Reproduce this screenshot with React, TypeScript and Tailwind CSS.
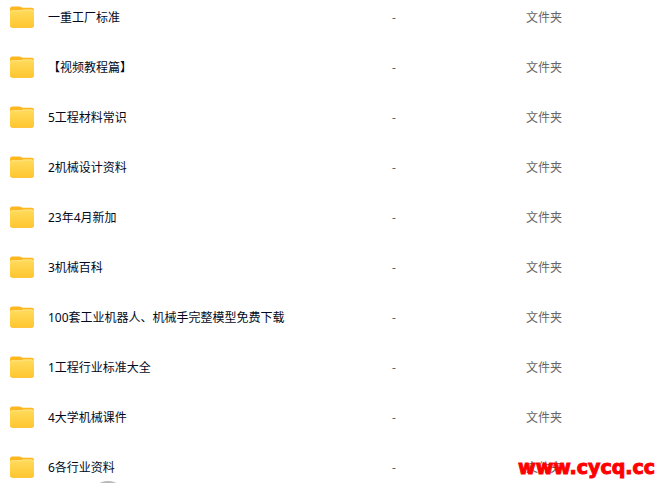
const folders = [
  "一重工厂标准",
  "【视频教程篇】",
  "5工程材料常识",
  "2机械设计资料",
  "23年4月新加",
  "3机械百科",
  "100套工业机器人、机械手完整模型免费下载",
  "1工程行业标准大全",
  "4大学机械课件",
  "6各行业资料",
];

function FolderIcon() {
  return (
    <svg width="24" height="22" viewBox="0 0 24 22" className="block" aria-hidden="true">
      <defs>
        <linearGradient id="folder-front" x1="0" y1="0" x2="0" y2="1">
          <stop offset="0" stopColor="#ffdc5e" />
          <stop offset="1" stopColor="#ffc62f" />
        </linearGradient>
      </defs>
      <path
        d="M0 3Q0 .4 2.3.4H9.5Q10.5.4 11.3 1L12.3 1.8H21.7Q24 1.8 24 4.1V12H0Z"
        fill="#ffb71f"
      />
      <path
        d="M0 6.3Q0 4.2 2.2 4.2H10.5Q11.6 4.2 12.4 3.8 13 3.5 14 3.5H21.8Q24 3.5 24 5.7V19.3Q24 21.7 21.8 21.7H2.2Q0 21.7 0 19.3Z"
        fill="url(#folder-front)"
      />
      <path
        d="M.5 6.5Q.6 4.7 2.4 4.7H10.6Q11.8 4.7 12.6 4.3 13.2 4 14 4H21.6Q23.4 4 23.5 5.8"
        fill="none"
        stroke="#ffe690"
        strokeWidth=".8"
      />
      <path d="M.6 20.2Q1.2 21.4 2.4 21.4H21.6Q22.8 21.4 23.4 20.2" fill="none" stroke="#fbbd2c" strokeWidth=".7" />
    </svg>
  );
}

export default function App() {
  return (
    <main className="relative h-screen overflow-hidden bg-white font-['Noto_Sans','Noto_Sans_CJK_SC',sans-serif] text-xs">
      <table className="w-full table-fixed border-collapse text-left">
        <colgroup>
          <col className="w-12" />
          <col />
          <col className="w-[134px]" />
          <col className="w-[133px]" />
        </colgroup>
        <tbody>
          {folders.map((name) => (
            <tr key={name} className="h-[50px] align-top">
              <td className="pt-1.5 pl-2.5">
                <FolderIcon />
              </td>
              <td className="truncate pt-2 leading-5 text-[#03081a]">{name}</td>
              <td className="pt-2 leading-5 text-[#666]">-</td>
              <td className="pt-2 leading-5 text-[#666]">文件夹</td>
            </tr>
          ))}
        </tbody>
      </table>

      {/* Floating button peeking in from the bottom edge */}
      <div className="absolute -bottom-9 left-[89px] size-[38px] rounded-full bg-[#b9b9bd]" />

      {/* Site watermark */}
      <div className="absolute right-1 bottom-1.5 font-['DejaVu_Sans',sans-serif] text-[19px] leading-5 font-bold text-[#ff0000] [-webkit-text-stroke:1px_#ff0000]">
        www.cycq.cc
      </div>
    </main>
  );
}
